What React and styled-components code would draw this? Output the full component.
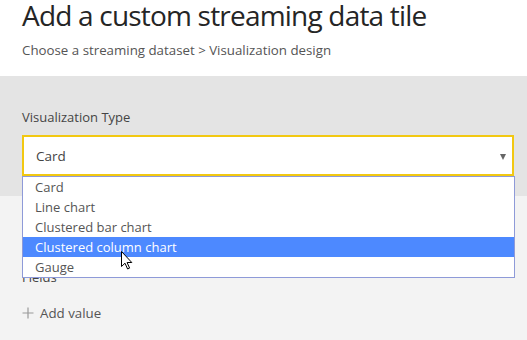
import React from "react";
import styled, { createGlobalStyle } from "styled-components";

const Global = createGlobalStyle`
  html, body { margin: 0; padding: 0; }
  body {
    width: 527px; height: 340px; overflow: hidden;
    font-family: "Open Sans", "Noto Sans", "Liberation Sans", sans-serif;
    background: #f3f3f3;
  }
`;

const Page = styled.div`
  position: relative;
  width: 527px;
  height: 340px;
  display: flex;
  flex-direction: column;
  overflow: hidden;
`;

const Header = styled.header`
  background: #fff;
  height: 76px;
  padding-left: 22px;
  box-sizing: border-box;
  display: flex;
  flex-direction: column;
`;

const Title = styled.h1`
  margin: 0;
  font-size: 28px;
  font-weight: 400;
  color: #252525;
  line-height: 30px;
  letter-spacing: -0.8px;
`;

const Breadcrumb = styled.div`
  margin-top: 11px;
  font-size: 13.3px;
  color: #555;
  line-height: 18px;
`;

const Band = styled.section`
  background: #e4e4e4;
  height: 120px;
  padding: 32px 13px 0 22px;
  box-sizing: border-box;
  display: flex;
  flex-direction: column;
`;

const Label = styled.div`
  font-size: 13px;
  color: #444;
  line-height: 18px;
  margin-bottom: 9px;
`;

const SelectWrap = styled.div`
  position: relative;
`;

const Select = styled.div`
  height: 41px;
  box-sizing: border-box;
  border: 2px solid #f2c811;
  background: #fff;
  display: flex;
  align-items: center;
  justify-content: space-between;
  padding: 0 6px 0 12px;
  font-size: 13.5px;
  color: #444;
`;

const Caret = styled.span`
  width: 0;
  height: 0;
  border-left: 3.5px solid transparent;
  border-right: 3.5px solid transparent;
  border-top: 6px solid #666;
  margin-top: 2px;
`;

const List = styled.ul`
  position: absolute;
  top: 100%;
  left: 0;
  width: calc(100% + 1px);
  box-sizing: border-box;
  margin: 0;
  padding: 0;
  list-style: none;
  background: #fff;
  border: 1px solid #8e9ad8;
  z-index: 2;
`;

const Item = styled.li`
  height: 20px;
  line-height: 20px;
  padding-left: 12px;
  font-size: 13px;
  color: ${(p) => (p.$active ? "#fff" : "#555")};
  background: ${(p) => (p.$active ? "#4d89ff" : "transparent")};
`;

const Lower = styled.section`
  flex: 1;
  background: #f3f3f3;
  padding: 72px 22px 0 22px;
  display: flex;
  flex-direction: column;
`;

const Fields = styled.div`
  font-size: 13px;
  color: #444;
  line-height: 18px;
`;

const AddValue = styled.div`
  margin-top: 18px;
  display: flex;
  align-items: center;
  gap: 6px;
  font-size: 13.3px;
  color: #555;
`;

const Cursor = styled.svg`
  position: absolute;
  left: 121px;
  top: 251px;
  z-index: 3;
`;

const items = [
  "Card",
  "Line chart",
  "Clustered bar chart",
  "Clustered column chart",
  "Gauge",
];

export default function App() {
  return (
    <>
      <Global />
      <Page>
        <Header>
          <Title>Add a custom streaming data tile</Title>
          <Breadcrumb>Choose a streaming dataset &gt; Visualization design</Breadcrumb>
        </Header>
        <Band>
          <Label>Visualization Type</Label>
          <SelectWrap>
            <Select>
              <span>Card</span>
              <Caret />
            </Select>
            <List>
              {items.map((it) => (
                <Item key={it} $active={it === "Clustered column chart"}>
                  {it}
                </Item>
              ))}
            </List>
          </SelectWrap>
        </Band>
        <Lower>
          <Fields>Fields</Fields>
          <AddValue>
            <svg width="12" height="12" viewBox="0 0 12 12">
              <path d="M6 0.5V11.5M0.5 6H11.5" stroke="#9a9a9a" strokeWidth="1.2" fill="none" />
            </svg>
            <span>Add value</span>
          </AddValue>
        </Lower>
        <Cursor width="12" height="19" viewBox="0 0 12 19">
          <path
            d="M0.5 0.5 L0.5 15.5 L4 12.2 L6.6 18 L8.6 17.1 L6.1 11.5 L10.8 11.5 Z"
            fill="#fff"
            stroke="#000"
            strokeWidth="1"
            strokeLinejoin="miter"
          />
        </Cursor>
      </Page>
    </>
  );
}
